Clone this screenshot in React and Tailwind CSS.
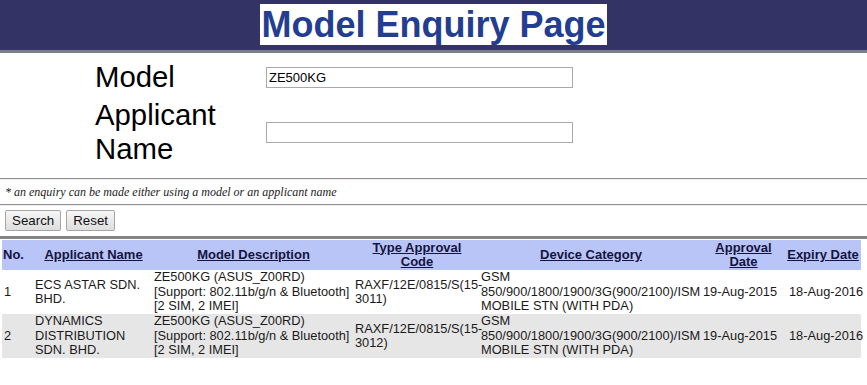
import React from "react";

const rows = [
  {
    no: "1",
    applicant: ["ECS ASTAR SDN.", "BHD."],
    model: ["ZE500KG (ASUS_Z00RD)", "[Support: 802.11b/g/n & Bluetooth]", "[2 SIM, 2 IMEI]"],
    code: ["RAXF/12E/0815/S(15-", "3011)"],
    cat: ["GSM", "850/900/1800/1900/3G(900/2100)/ISM", "MOBILE STN (WITH PDA)"],
    approval: "19-Aug-2015",
    expiry: "18-Aug-2016",
    bg: "bg-white",
  },
  {
    no: "2",
    applicant: ["DYNAMICS", "DISTRIBUTION", "SDN. BHD."],
    model: ["ZE500KG (ASUS_Z00RD)", "[Support: 802.11b/g/n & Bluetooth]", "[2 SIM, 2 IMEI]"],
    code: ["RAXF/12E/0815/S(15-", "3012)"],
    cat: ["GSM", "850/900/1800/1900/3G(900/2100)/ISM", "MOBILE STN (WITH PDA)"],
    approval: "19-Aug-2015",
    expiry: "18-Aug-2016",
    bg: "bg-[#e6e6e6]",
  },
];

function Lines({ lines }) {
  return lines.map((l, i) => (
    <React.Fragment key={i}>
      {i > 0 && <br />}
      {l}
    </React.Fragment>
  ));
}

export default function App() {
  return (
    <div className="w-[867px] min-h-[385px] bg-white font-['Liberation_Sans',Arial,sans-serif] text-black">
      {/* Header */}
      <div className="h-[53px] bg-[#333366] border-b-[3px] border-[#7f7f8c] flex items-start justify-center pt-[4px]">
        <span className="bg-white text-[#233d91] font-bold text-[36px] leading-[41px] px-[1px]">
          Model Enquiry Page
        </span>
      </div>

      {/* Form */}
      <div className="pt-[5px] pl-[95px] grid grid-cols-[171px_auto] items-center">
        <div className="py-[2px] text-[29.33px] leading-[34px]">Model</div>
        <div>
          <input
            defaultValue="ZE500KG"
            className="w-[307px] h-[21px] border border-[#a9a9a9] px-[2px] text-[13px] leading-[19px] outline-none font-['Liberation_Sans',Arial,sans-serif] text-black"
          />
        </div>
        <div className="py-[2px] text-[29.33px] leading-[34px]">
          Applicant
          <br />
          Name
        </div>
        <div>
          <input className="w-[307px] h-[21px] border border-[#a9a9a9] px-[2px] text-[13px] outline-none" />
        </div>
      </div>

      {/* Note */}
      <div className="mt-[10px] border-t border-t-[#8f8f8f] border-b border-b-[#ececec]" />
      <div className="h-[24px] flex items-center pl-[5px] font-['Liberation_Serif','Times_New_Roman',serif] italic text-[12px] text-[#222]">
        * an enquiry can be made either using a model or an applicant name
      </div>
      <div className="border-t border-t-[#8f8f8f] border-b border-b-[#ececec]" />

      {/* Buttons */}
      <div className="flex gap-[5px] pl-[5px] pt-[4px]">
        <button className="h-[21px] px-[6px] border border-[#a6a6a6] rounded-[2px] bg-gradient-to-b from-[#f6f6f6] to-[#dedede] text-[13.33px] leading-[17px] text-[#111]">
          Search
        </button>
        <button className="h-[21px] px-[6px] border border-[#a6a6a6] rounded-[2px] bg-gradient-to-b from-[#f6f6f6] to-[#dedede] text-[13.33px] leading-[17px] text-[#111]">
          Reset
        </button>
      </div>

      <div className="mt-[5px] border-t-[3px] border-[#858585]" />

      {/* Table */}
      <div className="pl-[2px] pt-[1px]">
        <table className="border-collapse text-[12.8px] leading-[14.5px] table-fixed w-[859px]">
          <colgroup>
            <col className="w-[32px]" />
            <col className="w-[119px]" />
            <col className="w-[201px]" />
            <col className="w-[126px]" />
            <col className="w-[222px]" />
            <col className="w-[83px]" />
            <col className="w-[76px]" />
          </colgroup>
          <thead>
            <tr className="bg-[#b9c4f7] h-[30px] text-[#141440] font-bold text-[13px]">
              <th className="text-left px-[1px] py-0 align-middle">No.</th>
              <th className="px-[1px] py-0 align-middle"><span className="underline">Applicant Name</span></th>
              <th className="px-[1px] py-0 align-middle"><span className="underline">Model Description</span></th>
              <th className="px-[1px] py-0 align-middle"><span className="underline">Type Approval<br />Code</span></th>
              <th className="px-[1px] py-0 align-middle"><span className="underline">Device Category</span></th>
              <th className="px-[1px] py-0 align-middle"><span className="underline">Approval<br />Date</span></th>
              <th className="px-[1px] py-0 align-middle whitespace-nowrap"><span className="underline">Expiry Date</span></th>
            </tr>
          </thead>
          <tbody className="text-[#1a1a1a]">
            {rows.map((r) => (
              <tr key={r.no} className={`${r.bg} h-[44px]`}>
                <td className="px-[2px] py-0 align-middle">{r.no}</td>
                <td className="px-[1px] py-0 align-middle whitespace-nowrap"><Lines lines={r.applicant} /></td>
                <td className="px-[1px] py-0 align-middle whitespace-nowrap"><Lines lines={r.model} /></td>
                <td className="px-[1px] py-0 align-middle whitespace-nowrap"><Lines lines={r.code} /></td>
                <td className="px-[1px] py-0 align-middle whitespace-nowrap"><Lines lines={r.cat} /></td>
                <td className="px-[1px] py-0 align-middle whitespace-nowrap">{r.approval}</td>
                <td className="pl-[4px] py-0 align-middle whitespace-nowrap">{r.expiry}</td>
              </tr>
            ))}
          </tbody>
        </table>
      </div>
    </div>
  );
}
